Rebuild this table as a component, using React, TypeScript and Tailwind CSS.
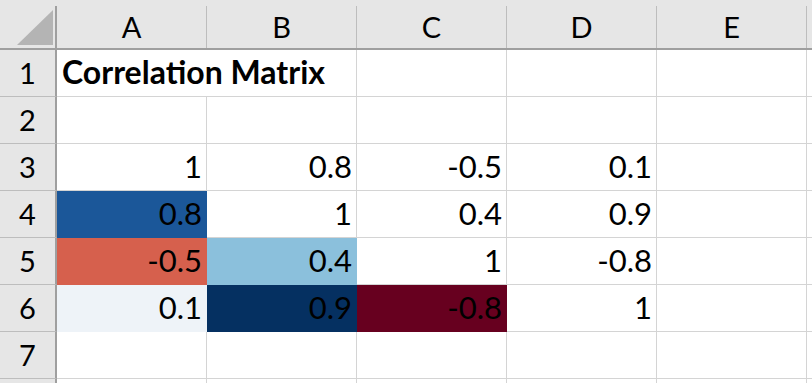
import React from "react";

type Cell = { v?: string; bg?: string; bold?: boolean; left?: boolean };

const cols = ["A", "B", "C", "D", "E"];

const rows: Cell[][] = [
  [{ v: "Correlation Matrix", bold: true, left: true }, {}, {}, {}, {}],
  [{}, {}, {}, {}, {}],
  [{ v: "1" }, { v: "0.8" }, { v: "-0.5" }, { v: "0.1" }, {}],
  [{ v: "0.8", bg: "#1b5799" }, { v: "1" }, { v: "0.4" }, { v: "0.9" }, {}],
  [{ v: "-0.5", bg: "#d6604d" }, { v: "0.4", bg: "#8bc0dc" }, { v: "1" }, { v: "-0.8" }, {}],
  [{ v: "0.1", bg: "#eef3f8" }, { v: "0.9", bg: "#053061" }, { v: "-0.8", bg: "#67001f" }, { v: "1" }, {}],
  [{}, {}, {}, {}, {}],
  [{}, {}, {}, {}, {}],
];

const font = { fontFamily: "Lato, 'Open Sans', sans-serif" };

export default function App() {
  return (
    <div className="w-[812px] h-[383px] overflow-hidden bg-white text-black" style={font}>
      {/* header row */}
      <div className="flex h-[50px] bg-[#e6e6e6] pt-[6px] border-b-2 border-[#9f9f9f]">
        <div className="relative w-[57px] shrink-0 border-r-2 border-[#9f9f9f]">
          <svg className="absolute left-0 top-[-6px]" width="55" height="48" viewBox="0 0 55 48">
            <polygon points="17,45 53,45 53,10" fill="#b4b4b4" />
          </svg>
        </div>
        {cols.map((c) => (
          <div
            key={c}
            className="w-[150px] shrink-0 border-r border-[#bdbdbd] flex items-center justify-center text-[29px] leading-none pb-[2px]"
          >
            {c}
          </div>
        ))}
        <div className="w-[150px] shrink-0" />
      </div>
      {rows.map((r, i) => (
        <div key={i} className="flex h-[47px]">
          <div className="w-[57px] shrink-0 bg-[#e6e6e6] border-r-2 border-b border-r-[#9f9f9f] border-b-[#bdbdbd] flex items-center justify-center text-[29px] leading-none pb-[2px]">
            {i < 7 ? i + 1 : ""}
          </div>
          {r.map((cell, j) => (
            <div
              key={j}
              className={`relative w-[150px] shrink-0 border-r border-b flex items-end leading-none pb-[8px] whitespace-nowrap ${
                cell.left ? "justify-start z-10" : "justify-end pr-[4px]"
              } text-[31px]`}
              style={{
                backgroundColor: cell.bg ?? "#ffffff",
                borderColor: cell.bg ?? "#d4d4d4",
              }}
            >
              {cell.left ? (
                <span className="absolute left-0 top-0 bottom-0 flex items-end pl-[5px] pr-[2px] pb-[8px] bg-white font-bold text-[32px]">
                  {cell.v}
                </span>
              ) : (
                cell.v
              )}
            </div>
          ))}
          <div className="w-[150px] shrink-0 border-b border-[#d4d4d4]" />
        </div>
      ))}
    </div>
  );
}
